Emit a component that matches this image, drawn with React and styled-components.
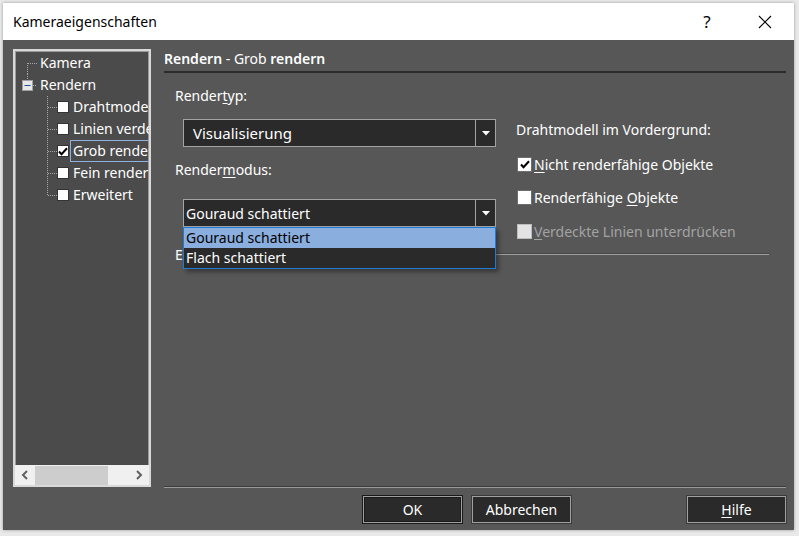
import React from 'react';
import styled, { createGlobalStyle } from 'styled-components';

const GlobalStyle = createGlobalStyle`
  html, body {
    margin: 0;
    padding: 0;
    background: #e9e9e9;
  }
  body {
    font-family: "Segoe UI", "Noto Sans", "Open Sans", sans-serif;
    font-size: 14px;
  }
`;

const Window = styled.div`
  margin: 3px;
  width: 791px;
  height: 527px;
  display: flex;
  flex-direction: column;
  box-shadow: 0 0 3px rgba(0, 0, 0, 0.35);
`;

const TitleBar = styled.div`
  height: 37px;
  background: #fff;
  display: flex;
  align-items: center;
  padding-left: 10px;
`;

const Title = styled.div`
  flex: 1;
  font-size: 14px;
  color: #000;
`;

const TitleButton = styled.div`
  width: 58px;
  height: 37px;
  display: flex;
  align-items: center;
  justify-content: center;
  color: #000;
  font-size: 17px;
`;

const Body = styled.div`
  flex: 1;
  background: #575757;
  display: flex;
  gap: 13px;
  padding: 9px 8px 7px 10px;
  color: #fff;
`;

const Tree = styled.div`
  width: 134px;
  height: 434px;
  border: 2px solid #d9d9d9;
  box-shadow: inset 0 0 0 1px #9a9a9a;
  background: #4b4b4b;
  display: flex;
  flex-direction: column;
  overflow: hidden;
`;

const TreeItems = styled.div`
  flex: 1;
  padding-top: 1px;
`;

const TreeRow = styled.div`
  height: 22px;
  display: flex;
  align-items: center;
  white-space: nowrap;
`;

const Gutter = styled.svg`
  flex: none;
  display: block;
`;

const TreeCheck = styled.span`
  flex: none;
  width: 10px;
  height: 10px;
  background: #fff;
  border: 1px solid #333;
  margin-right: 1px;
  display: flex;
  align-items: center;
  justify-content: center;
`;

const TreeLabel = styled.span`
  font-size: 14px;
  line-height: 20px;
  padding: 0 2px;
  border: 1px solid ${(p) => (p.$selected ? '#8fb1dd' : 'transparent')};
`;

const HScroll = styled.div`
  height: 20px;
  background: #f0f0f0;
  display: flex;
  align-items: center;
`;

const ScrollArrow = styled.div`
  width: 20px;
  height: 20px;
  display: flex;
  align-items: center;
  justify-content: center;
`;

const ScrollTrack = styled.div`
  flex: 1;
  height: 20px;
  display: flex;
  align-items: center;
`;

const ScrollThumb = styled.div`
  width: 73px;
  height: 19px;
  background: #cdcdcd;
`;

const Main = styled.div`
  flex: 1;
  display: flex;
  flex-direction: column;
`;

const Header = styled.div`
  font-size: 14px;
  line-height: 20px;
  padding-bottom: 2px;
  border-bottom: 2px solid #2b2b2b;
  b {
    font-weight: 600;
  }
`;

const Columns = styled.div`
  display: flex;
  padding-left: 11px;
`;

const LeftCol = styled.div`
  width: 320px;
  display: flex;
  flex-direction: column;
`;

const RightCol = styled.div`
  margin-left: 21px;
  padding-top: 47px;
  display: flex;
  flex-direction: column;
`;

const FieldLabel = styled.div`
  font-size: 14px;
  line-height: 20px;
  margin-top: ${(p) => p.$top}px;
`;

const ComboWrap = styled.div`
  position: relative;
  margin-left: 8px;
  margin-top: ${(p) => p.$top}px;
  width: 313px;
  height: 28px;
  display: flex;
`;

const ComboField = styled.div`
  flex: 1;
  background: #2a2a2a;
  border: 1px solid #a3a3a3;
  display: flex;
  align-items: center;
  padding-left: ${(p) => p.$pad}px;
  font-size: ${(p) => p.$size}px;
`;

const ComboButton = styled.div`
  width: 19px;
  background: #2a2a2a;
  border: 1px solid #a3a3a3;
  border-left: none;
  display: flex;
  align-items: center;
  justify-content: center;
`;

const DropList = styled.div`
  position: absolute;
  left: 0;
  top: 28px;
  width: 311px;
  border: 1px solid #1d7bd6;
  background: #2a2a2a;
  box-shadow: 3px 3px 4px rgba(0, 0, 0, 0.35);
  z-index: 2;
`;

const DropItem = styled.div`
  height: 20px;
  line-height: 20px;
  padding-left: 2px;
  font-size: 14px;
  background: ${(p) => (p.$active ? '#8aaedd' : '#2a2a2a')};
  color: ${(p) => (p.$active ? '#000' : '#fff')};
`;

const CheckRow = styled.label`
  display: flex;
  align-items: center;
  height: 20px;
  margin-top: ${(p) => p.$top}px;
  font-size: 14px;
  color: ${(p) => (p.$disabled ? '#a3a3a3' : '#fff')};
`;

const Box = styled.span`
  width: 13px;
  height: 13px;
  margin-left: 1px;
  margin-right: 2px;
  background: ${(p) => (p.$disabled ? '#e3e3e3' : '#fff')};
  border: 1px solid ${(p) => (p.$disabled ? '#bdbdbd' : '#6d6d6d')};
  display: flex;
  align-items: center;
  justify-content: center;
`;

const Group = styled.div`
  margin: 3px 17px 0 11px;
  height: 20px;
  display: flex;
  align-items: center;
`;

const GroupLabel = styled.span`
  font-size: 14px;
  padding-right: 4px;
`;

const GroupLine = styled.div`
  flex: 1;
  height: 1px;
  background: #a0a0a0;
  box-shadow: 0 -1px 0 #464646;
`;

const Spacer = styled.div`
  flex: 1;
`;

const Separator = styled.div`
  height: 1px;
  background: #9a9a9a;
  border-top: 1px solid #3c3c3c;
`;

const ButtonRow = styled.div`
  display: flex;
  justify-content: flex-end;
  gap: 10px;
  margin-top: 8px;
`;

const Button = styled.div`
  width: 97px;
  height: 25px;
  background: #2a2a2a;
  border: 1px solid #a0a0a0;
  box-shadow: ${(p) => (p.$default ? '0 0 0 1px #1a1a1a, inset 0 0 0 1px #1a1a1a' : '0 0 0 1px #3a3a3a')};
  display: flex;
  align-items: center;
  justify-content: center;
  font-size: 14px;
  color: #fff;
  margin-right: ${(p) => p.$gapAfter || 0}px;
`;

const U = styled.span`
  text-decoration: underline;
  text-underline-offset: 2px;
`;

const Arrow = () => (
  <svg width="8" height="5" viewBox="0 0 8 5">
    <path d="M0 0 H8 L4 4.5 Z" fill="#fff" />
  </svg>
);

const Tick = ({ color = '#000' }) => (
  <svg width="10" height="9" viewBox="0 0 10 9">
    <path d="M1 4.5 L3.5 7.2 L9 1.2" stroke={color} strokeWidth="2" fill="none" />
  </svg>
);

const dot = { stroke: '#a8a8a8', strokeWidth: 1, strokeDasharray: '1 1' };

const RootGutter = ({ first, expander }) => (
  <Gutter width="22" height="22">
    {first && <line x1="12.5" y1="11" x2="12.5" y2="22" {...dot} />}
    {first && <line x1="13" y1="11.5" x2="22" y2="11.5" {...dot} />}
    {expander && (
      <g>
        <line x1="12.5" y1="0" x2="12.5" y2="5" {...dot} />
        <rect x="7.5" y="6.5" width="10" height="10" fill="#e8e8e8" stroke="#a0a0a0" />
        <line x1="9.5" y1="11.5" x2="15.5" y2="11.5" stroke="#1e4fa0" strokeWidth="1" />
        <line x1="18" y1="11.5" x2="22" y2="11.5" {...dot} />
      </g>
    )}
  </Gutter>
);

const ChildGutter = ({ last }) => (
  <Gutter width="42" height="22">
    <line x1="32.5" y1="0" x2="32.5" y2={last ? 11.5 : 22} {...dot} />
    <line x1="33" y1="11.5" x2="42" y2="11.5" {...dot} />
  </Gutter>
);

const children = [
  { label: 'Drahtmodell' },
  { label: 'Linien verdeckt' },
  { label: 'Grob rendern', checked: true, selected: true },
  { label: 'Fein rendern' },
  { label: 'Erweitert', last: true },
];

export default function App() {
  return (
    <>
      <GlobalStyle />
      <Window>
        <TitleBar>
          <Title>Kameraeigenschaften</Title>
          <TitleButton>?</TitleButton>
          <TitleButton>
            <svg width="14" height="14" viewBox="0 0 14 14">
              <path d="M1 1 L13 13 M13 1 L1 13" stroke="#000" strokeWidth="1.1" />
            </svg>
          </TitleButton>
        </TitleBar>
        <Body>
          <Tree>
            <TreeItems>
              <TreeRow>
                <RootGutter first />
                <TreeLabel>Kamera</TreeLabel>
              </TreeRow>
              <TreeRow>
                <RootGutter expander />
                <TreeLabel>Rendern</TreeLabel>
              </TreeRow>
              {children.map((c) => (
                <TreeRow key={c.label}>
                  <ChildGutter last={c.last} />
                  <TreeCheck>{c.checked && <Tick />}</TreeCheck>
                  <TreeLabel $selected={c.selected}>{c.label}</TreeLabel>
                </TreeRow>
              ))}
            </TreeItems>
            <HScroll>
              <ScrollArrow>
                <svg width="8" height="10" viewBox="0 0 8 10">
                  <path d="M6 1 L2 5 L6 9" stroke="#606060" strokeWidth="2" fill="none" />
                </svg>
              </ScrollArrow>
              <ScrollTrack>
                <ScrollThumb />
              </ScrollTrack>
              <ScrollArrow>
                <svg width="8" height="10" viewBox="0 0 8 10">
                  <path d="M2 1 L6 5 L2 9" stroke="#606060" strokeWidth="2" fill="none" />
                </svg>
              </ScrollArrow>
            </HScroll>
          </Tree>
          <Main>
            <Header>
              <b>Rendern</b> - Grob <b>rendern</b>
            </Header>
            <Columns>
              <LeftCol>
                <FieldLabel $top={13}>
                  Render<U>t</U>yp:
                </FieldLabel>
                <ComboWrap $top={13}>
                  <ComboField $pad={9} $size={15}>Visualisierung</ComboField>
                  <ComboButton>
                    <Arrow />
                  </ComboButton>
                </ComboWrap>
                <FieldLabel $top={13}>
                  Render<U>m</U>odus:
                </FieldLabel>
                <ComboWrap $top={19}>
                  <ComboField $pad={2} $size={14}>Gouraud schattiert</ComboField>
                  <ComboButton>
                    <Arrow />
                  </ComboButton>
                  <DropList>
                    <DropItem $active>Gouraud schattiert</DropItem>
                    <DropItem>Flach schattiert</DropItem>
                  </DropList>
                </ComboWrap>
              </LeftCol>
              <RightCol>
                <FieldLabel $top={0}>Drahtmodell im Vordergrund:</FieldLabel>
                <CheckRow $top={14}>
                  <Box>
                    <Tick />
                  </Box>
                  <span>
                    <U>N</U>icht renderfähige Objekte
                  </span>
                </CheckRow>
                <CheckRow $top={13}>
                  <Box />
                  <span>
                    Renderfähige <U>O</U>bjekte
                  </span>
                </CheckRow>
                <CheckRow $top={14} $disabled>
                  <Box $disabled />
                  <span>
                    <U>V</U>erdeckte Linien unterdrücken
                  </span>
                </CheckRow>
              </RightCol>
            </Columns>
            <Group>
              <GroupLabel>Einstellungen</GroupLabel>
              <GroupLine />
            </Group>
            <Spacer />
            <Separator />
            <ButtonRow>
              <Button $default>OK</Button>
              <Button $gapAfter={106}>Abbrechen</Button>
              <Button>
                <U>H</U>ilfe
              </Button>
            </ButtonRow>
          </Main>
        </Body>
      </Window>
    </>
  );
}
